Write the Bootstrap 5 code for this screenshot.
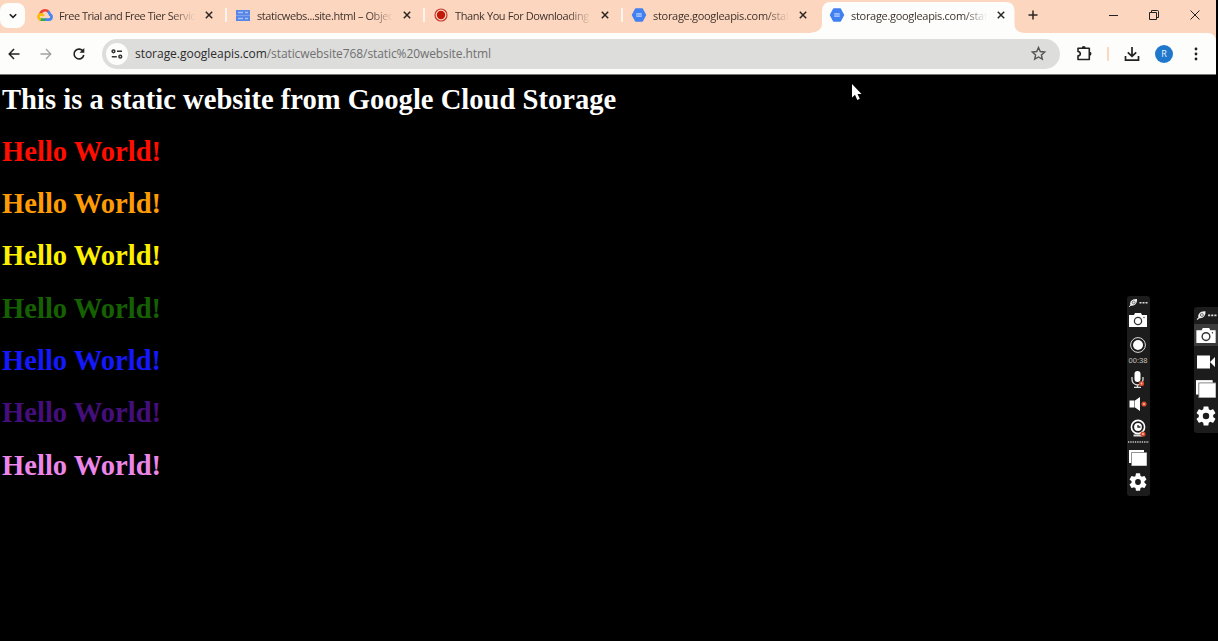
<!DOCTYPE html>
<html lang="en">
<head>
<meta charset="utf-8">
<meta name="viewport" content="width=device-width, initial-scale=1">
<title>storage.googleapis.com/staticwebsite768/static%20website.html</title>
<link href="https://cdn.jsdelivr.net/npm/bootstrap@5.3.0/dist/css/bootstrap.min.css" rel="stylesheet">
<style>
  body { background: #000; font-family: "Open Sans", "Noto Sans", sans-serif; overflow: hidden; height: 641px; }
  svg { display: block; flex: none; overflow: visible; }
  .browser { width: 1216px; background: #fdd6bf; }
  .tabstrip { height: 33px; }
  .tab-search { width: 25px; height: 25px; border-radius: 8px; background: #fdfdfb; margin-top: 3px; margin-right: 4px; }
  .tab { width: 198px; height: 33px; padding: 0 13px 3px 8px; font-size: 11px; color: #3d332d; position: relative; }
  .tab + .tab:not(.current)::before { content: ""; position: absolute; left: -2px; top: 8px; width: 2px; height: 14px; background: #fff4ec; }
  .tab-title { width: 138px; margin-left: 6px; padding-top: 1px; line-height: 18px; letter-spacing: -.3px;
    -webkit-mask-image: linear-gradient(90deg, #000 112px, transparent 136px); mask-image: linear-gradient(90deg, #000 112px, transparent 136px); }
  .tight { letter-spacing: -.48px; }
  .snug { letter-spacing: -.4px; }
  .current-bg { position: absolute; left: -7px; top: 2px; z-index: 0; }
  .tab > :not(.current-bg) { position: relative; }
  .toolbar { height: 41px; background: #fdfdfb; border-radius: 0 8px 0 0; }
  .omnibox { width: 958px; height: 30px; background: #dddddc; border-radius: 15px; font-size: 12px; color: #707070; padding: 0 14px 0 4px; }
  .site-info { width: 22px; height: 22px; background: #fdfdfb; border-radius: 50%; }
  .url { margin-left: 7px; letter-spacing: -.09px; white-space: nowrap; }
  .url b { font-weight: 400; color: #2c2c2c; letter-spacing: -.03px; }
  .avatar { width: 18px; height: 18px; border-radius: 50%; background: #1f78cb; color: #e8f4ff; font-size: 9px; }
  .edge { height: 1px; background: #777; }
  .page-text { padding: 8.6px 2px 0; font-family: "Liberation Serif", serif; }
  .page-text h1 { font-size: 28.6px; font-weight: 700; line-height: 32.3px; margin: 0 0 20px; white-space: nowrap; }
  .recorder { position: absolute; background: #1c1c1c; border-radius: 3px; }
  .rec-main { left: 1127px; top: 296px; width: 23px; height: 200px; padding-right: 1px; }
  .rec-side { left: 1194px; top: 307px; width: 24px; height: 126px; border-radius: 3px 0 0 3px; }
  .timer { font: 7.5px/8px "Liberation Sans", sans-serif; color: #c9c4be; }
  .pointer { position: absolute; left: 851px; top: 84px; }
</style>
</head>
<body>
<svg width="0" height="0" class="position-absolute">
  <defs>
    <symbol id="x" viewBox="0 0 10 10"><path d="M1.8 1.8 8.2 8.2M8.2 1.8 1.8 8.2" stroke="#2b2623" stroke-width="1.5" fill="none"/></symbol>
    <symbol id="bucket" viewBox="0 0 16 16"><path d="M4.7 2h6.600L14.500 8l-3.200 6H4.700L1.500 8z" fill="#4180f0" stroke="#4180f0" stroke-width="1.500" stroke-linejoin="round"/><rect x="5.300" y="6" width="5.400" height="4" fill="#9dc0fb"/><path d="M5.300 8h5.400" stroke="#6d9ef5"/></symbol>
    <symbol id="cam" viewBox="0 0 18 14"><path d="M0 2h5l1-2h6l1 2h5v12H0z" fill="#fff"/><circle cx="9" cy="8" r="3.600" fill="#fff" stroke="#333" stroke-width="1.300"/><circle cx="15" cy="4.500" r=".7" fill="#333"/></symbol>
    <symbol id="stack" viewBox="0 0 18 16"><path d="M0 0h15v13H0z" fill="#fff"/><path d="M2.500 2.500H18V16H2.500z" fill="#fff" stroke="#777" stroke-width=".8"/></symbol>
    <symbol id="gear" viewBox="2 2 20 20"><path fill="#fff" fill-rule="evenodd" d="M19.140 12.940c.04-.3.060-.610.060-.940s-.020-.640-.070-.940l2.030-1.580a.49.490 0 0 0 .120-.610l-1.920-3.320a.49.490 0 0 0-.590-.220l-2.390.960a7 7 0 0 0-1.620-.940L14.400 2.810a.48.480 0 0 0-.480-.410h-3.840a.47.470 0 0 0-.470.410L9.250 5.350c-.590.240-1.130.570-1.620.940L5.240 5.330a.48.480 0 0 0-.590.220L2.740 8.870a.47.470 0 0 0 .120.610l2.030 1.580c-.05.300-.090.630-.090.940s.020.640.070.940l-2.030 1.580a.49.490 0 0 0-.120.610l1.920 3.320c.120.220.370.290.590.220l2.390-.960c.500.380 1.030.700 1.620.940l.360 2.540c.05.240.240.410.480.410h3.840c.240 0 .440-.170.470-.410l.360-2.540c.590-.240 1.130-.560 1.620-.940l2.390.960c.220.080.470 0 .590-.220l1.920-3.320a.47.470 0 0 0-.120-.610zM12 15.200a3.200 3.200 0 1 1 0-6.400 3.200 3.200 0 0 1 0 6.400"/></symbol>
    <symbol id="grip" viewBox="0 0 20 9"><path d="M2.500 7.500C1 4 4 .5 9 1 9.500 5 6.500 8.500 2.500 7.500z" fill="#eee"/><path d="M1 8.800 3 7" stroke="#eee"/><circle cx="5.600" cy="4.500" r="1.400" fill="none" stroke="#444" stroke-width=".7"/><path d="M11.500 4h2v1.600h-2zM14.500 4h2v1.600h-2zM17.500 4h2v1.600h-2z" fill="#ddd"/></symbol>
    <symbol id="off" viewBox="0 0 6 6"><circle cx="3" cy="3" r="2.600" fill="#d84a2b"/><circle cx="3" cy="3" r=".9" fill="#f7c9b9"/></symbol>
  </defs>
</svg>

<header class="browser">
  <div class="tabstrip d-flex">
    <div class="tab-search d-flex align-items-center justify-content-center">
      <svg width="8" height="6" viewBox="0 0 8 6"><path d="M.8 1.200 4 4.400 7.200 1.200" fill="none" stroke="#222" stroke-width="1.600"/></svg>
    </div>
    <div class="tab d-flex align-items-center">
      <svg width="16" height="14" viewBox="0 0 16 14" fill="none" stroke-width="2.700"><path d="M3.300 6.200A4.800 4.800 0 0 1 11.500 3.800" stroke="#e94335"/><path d="M11.100 3.500A5 5 0 0 1 13 6.500C15.300 7.500 15.100 11.600 12 11.600H8" stroke="#4285f4"/><path d="M8.500 11.600H4.300L3 11" stroke="#34a853"/><path d="M3.700 11.400C.4 10 1 6.300 4 6.300 5.300 6.300 6 7 6.500 8" stroke="#fbbc05"/></svg>
      <div class="tab-title tight text-nowrap">Free Trial and Free Tier Servic</div>
      <svg class="ms-auto" width="10" height="10"><use href="#x"/></svg>
    </div>
    <div class="tab d-flex align-items-center">
      <svg width="16" height="13" viewBox="0 0 16 13"><path d="M1 1h14v11H1z" fill="#7fa2ea"/><path d="M1 1h14v5H1zM1 7h14v5H1z" fill="#5686e6"/><path d="M3 3.500h5M10 3.500h3M3 9.500h5M10 9.500h3" stroke="#a4c0f6" stroke-width="1.500"/></svg>
      <div class="tab-title snug text-nowrap">staticwebs...site.html – Objec</div>
      <svg class="ms-auto" width="10" height="10"><use href="#x"/></svg>
    </div>
    <div class="tab d-flex align-items-center">
      <svg width="16" height="16" viewBox="0 0 16 16"><circle cx="8" cy="8" r="6" fill="#fbd9cb" stroke="#c33a2a" stroke-width="1.200"/><circle cx="8" cy="8" r="4.200" fill="#c41808"/></svg>
      <div class="tab-title snug text-nowrap">Thank You For Downloading</div>
      <svg class="ms-auto" width="10" height="10"><use href="#x"/></svg>
    </div>
    <div class="tab d-flex align-items-center">
      <svg width="16" height="16"><use href="#bucket"/></svg>
      <div class="tab-title text-nowrap">storage.googleapis.com/stat</div>
      <svg class="ms-auto" width="10" height="10"><use href="#x"/></svg>
    </div>
    <div class="tab current d-flex align-items-center">
      <svg class="current-bg" width="209" height="31" viewBox="0 0 209 31"><path d="M-7 31C0 31 8 29 8 22V9Q8 0 17 0H191.500Q200.500 0 200.500 9V22C200.500 29 206 31 214 31z" fill="#fdfdfb"/></svg>
      <svg width="16" height="16"><use href="#bucket"/></svg>
      <div class="tab-title text-nowrap">storage.googleapis.com/stat</div>
      <svg class="ms-auto" width="10" height="10"><use href="#x"/></svg>
    </div>
    <div class="d-flex align-items-center flex-grow-1 pb-1">
      <svg style="margin-left:9px" width="10" height="10" viewBox="0 0 10 10"><path d="M5 .5v9M.5 5h9" stroke="#2b2623" stroke-width="1.500"/></svg>
      <div class="d-flex align-items-center ms-auto" style="gap:31px;margin-right:16px">
        <svg width="9" height="10" viewBox="0 0 9 10"><path d="M0 5.500h9" stroke="#222"/></svg>
        <svg width="10" height="10" viewBox="0 0 10 10" fill="none" stroke="#222"><path d="M.5 2.500h7v7h-7z"/><path d="M2.500 2.500v-2h6q1 0 1 1v6h-2"/></svg>
        <svg width="10" height="10" viewBox="0 0 10 10"><path d="M.5.500l9 9M9.500.500l-9 9" stroke="#222"/></svg>
      </div>
    </div>
  </div>
  <div class="toolbar d-flex align-items-center">
    <svg style="margin-left:8px" width="12" height="12" viewBox="0 0 12 12" fill="none" stroke="#222" stroke-width="1.500"><path d="M11.500 6H1.500M6 1 1.200 6 6 11"/></svg>
    <svg style="margin-left:20px" width="12" height="12" viewBox="0 0 12 12" fill="none" stroke="#a2a2a2" stroke-width="1.300"><path d="M.5 6h10M6 1l4.800 5L6 11"/></svg>
    <svg style="margin-left:21px" width="12" height="12" viewBox="0 0 12 12"><path d="M10.200 3.500A4.900 4.900 0 1 0 10.800 7" fill="none" stroke="#222" stroke-width="1.600"/><path d="M11.300 0v4.800H6.500z" fill="#222"/></svg>
    <div class="omnibox d-flex align-items-center" style="margin-left:17px">
      <div class="site-info d-flex align-items-center justify-content-center">
        <svg width="12" height="10" viewBox="0 0 12 10" fill="none" stroke="#333" stroke-width="1.500"><circle cx="2.500" cy="2.300" r="1.400"/><path d="M6 2.300h5M.8 7.700h5"/><circle cx="9.300" cy="7.700" r="1.400"/></svg>
      </div>
      <div class="url"><b>storage.googleapis.com</b>/staticwebsite768/static%20website.html</div>
      <svg class="ms-auto" width="15" height="15" viewBox="0 0 15 15"><path d="M7.500 1.500 9.300 5.500 13.700 6 10.400 8.900 11.300 13.200 7.500 11 3.700 13.200 4.600 8.900 1.300 6 5.700 5.500z" fill="none" stroke="#555" stroke-width="1.400"/></svg>
    </div>
    <svg style="margin-left:17px" width="15" height="15" viewBox="0 0 15 15"><path d="M1 2.200H12.300V13.500H1V9.900Q3.300 9.600 3.300 7.700T1 5.500z" fill="none" stroke="#222" stroke-width="1.600" stroke-linejoin="round"/><path d="M4.700 2a2 2 0 0 1 4 0zM12.500 5.700a2 2 0 0 1 0 4z" fill="#222"/></svg>
    <svg style="margin-left:15px" width="2" height="14"><path d="M1 0v14" stroke="#fcd9bd" stroke-width="2"/></svg>
    <svg style="margin-left:15px" width="16" height="16" viewBox="0 0 16 16"><path d="M8 1v9M3.800 6.300 8 10.300l4.200-4M1.500 10v4.200h13V10" fill="none" stroke="#222" stroke-width="1.700"/></svg>
    <div class="avatar d-flex align-items-center justify-content-center" style="margin-left:15px">R</div>
    <svg style="margin-left:21px" width="4" height="14" viewBox="0 0 4 14" fill="#222"><circle cx="2" cy="2" r="1.400"/><circle cx="2" cy="7" r="1.400"/><circle cx="2" cy="12" r="1.400"/></svg>
  </div>
  <div class="edge"></div>
</header>

<main class="page-text">
  <h1 style="color:#fff">This is a static website from Google Cloud Storage</h1>
  <h1 style="color:#fe0d00">Hello World!</h1>
  <h1 style="color:#ff9c05">Hello World!</h1>
  <h1 style="color:#fff000">Hello World!</h1>
  <h1 style="color:#156102">Hello World!</h1>
  <h1 style="color:#1418fb">Hello World!</h1>
  <h1 style="color:#450e7c">Hello World!</h1>
  <h1 style="color:#ec86e8">Hello World!</h1>
</main>

<svg class="pointer" width="11" height="17" viewBox="0 0 11 17"><path d="M1 0v13.500l3-2.800 2.300 5.300 2.500-1.200-2.300-4.800H10.500z" fill="#fff"/></svg>

<aside class="recorder rec-main d-flex flex-column align-items-center">
  <svg width="20" height="9" style="margin-top:2px"><use href="#grip"/></svg>
  <svg width="18" height="14" style="margin-top:6px"><use href="#cam"/></svg>
  <svg width="16" height="16" style="margin-top:10px" viewBox="0 0 16 16"><circle cx="8" cy="8" r="7.400" fill="none" stroke="#ddd"/><circle cx="8" cy="8" r="5" fill="#fff"/></svg>
  <div class="timer" style="margin-top:4px">00:38</div>
  <svg width="16" height="17" style="margin-top:6px" viewBox="0 0 16 17"><rect x="4.500" width="6" height="11" rx="3" fill="#fff"/><path d="M2 6v2.500a5.500 5.500 0 0 0 11 0V6M7.500 14v2.500M4 16.300h7" fill="none" stroke="#ddd" stroke-width="1.300"/><use href="#off" x="8.500" y="9.500" width="6" height="6"/></svg>
  <svg width="18" height="14" style="margin-top:9px" viewBox="0 0 18 14"><path d="M.5 3.500h5v7h-5zM6 3.500 11 0v14L6 10.500z" fill="#fff"/><use href="#off" x="12" y="4" width="6" height="6"/></svg>
  <svg width="16" height="18" style="margin-top:8px" viewBox="0 0 16 18"><circle cx="8" cy="8" r="6.600" fill="none" stroke="#fff" stroke-width="1.600"/><circle cx="8" cy="8" r="3.900" fill="#fff"/><path d="M8 6V8h2.500" stroke="#222" stroke-width="1.300" fill="none"/><path d="M3.500 15.500h9v2h-9z" fill="#ddd"/><use href="#off" x="10" y="12" width="6" height="6"/></svg>
  <svg width="21" height="2" style="margin-top:4px"><path d="M0 1h21" stroke="#ccc" stroke-width="1.500" stroke-dasharray="1.300 1"/></svg>
  <svg width="18" height="16" style="margin-top:7px"><use href="#stack"/></svg>
  <svg width="18" height="18" style="margin-top:7px"><use href="#gear"/></svg>
</aside>

<aside class="recorder rec-side d-flex flex-column align-items-center">
  <svg width="21" height="10" style="margin-top:3px"><use href="#grip"/></svg>
  <div class="d-flex align-items-center justify-content-center w-100" style="height:22px;margin-top:4px;background:#3b3b3b"><svg width="20" height="15"><use href="#cam"/></svg></div>
  <svg width="20" height="14" style="margin-top:9px" viewBox="0 0 20 14"><path d="M1 .500h13v13H1zM14 7l5-5v10z" fill="#fff"/></svg>
  <svg width="20" height="18" style="margin-top:11px"><use href="#stack"/></svg>
  <svg width="20" height="20" style="margin-top:8px"><use href="#gear"/></svg>
</aside>
<script src="https://cdn.jsdelivr.net/npm/bootstrap@5.3.0/dist/js/bootstrap.bundle.min.js"></script>
</body>
</html>
